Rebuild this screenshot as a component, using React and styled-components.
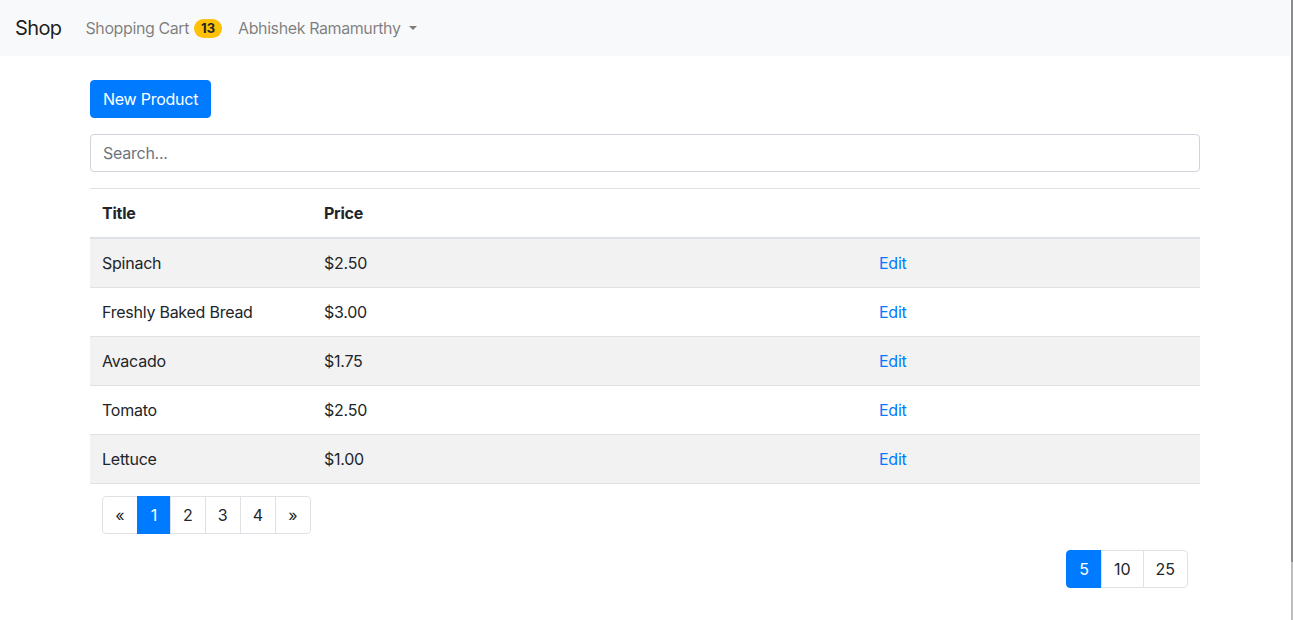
import { useState } from 'react'
import styled, { createGlobalStyle } from 'styled-components'

const GlobalStyle = createGlobalStyle`
    * { box-sizing: border-box; }
    body {
        margin: 0;
        font-family: Inter, "Noto Sans", sans-serif;
        font-size: 16px;
        line-height: 1.5;
        letter-spacing: -0.25px;
        color: #212529;
        background: #fff;
    }
`

const products = [
    { title: 'Spinach', price: 2.5 },
    { title: 'Freshly Baked Bread', price: 3 },
    { title: 'Avacado', price: 1.75 },
    { title: 'Tomato', price: 2.5 },
    { title: 'Lettuce', price: 1 },
]

const Page = styled.div`
    width: 1290px;
    min-height: 620px;
`

const Navbar = styled.nav`
    height: 56px;
    display: flex;
    align-items: center;
    padding: 8px 15px;
    background: #f8f9fa;
`

const Brand = styled.a`
    font-size: 20px;
    letter-spacing: -0.6px;
    color: rgba(0,0,0,.9);
    margin-right: 16px;
    text-decoration: none;
`

const NavLink = styled.a`
    display: flex;
    align-items: center;
    padding: 8px;
    letter-spacing: -0.4px;
    color: rgba(0,0,0,.5);
    text-decoration: none;
`

const Badge = styled.span`
    display: inline-block;
    margin-left: 5px;
    padding: 3px 7px;
    font-size: 13px;
    font-weight: 700;
    line-height: 13px;
    letter-spacing: 0;
    color: #212529;
    background: #ffc107;
    border-radius: 10px;
`

const Caret = styled.span`
    display: inline-block;
    margin-left: 8px;
    border-top: 4px solid;
    border-left: 4px solid transparent;
    border-right: 4px solid transparent;
`

const Container = styled.main`
    width: 1140px;
    margin: 0 auto;
    padding: 24px 15px 0;
`

const Button = styled.button`
    font: inherit;
    letter-spacing: inherit;
    color: #fff;
    background: #007bff;
    border: 1px solid #007bff;
    border-radius: 4px;
    padding: 6px 12px;
    line-height: 24px;
    cursor: pointer;
`

const Search = styled.input`
    display: block;
    width: 100%;
    height: 38px;
    margin: 16px 0;
    padding: 6px 12px;
    font: inherit;
    letter-spacing: inherit;
    color: #495057;
    border: 1px solid #ced4da;
    border-radius: 4px;
    &::placeholder { color: #6c757d; }
`

const Table = styled.table`
    width: 100%;
    border-collapse: collapse;
    table-layout: fixed;
`

const Th = styled.th`
    text-align: left;
    padding: 12px;
    border-top: 1px solid #dee2e6;
    border-bottom: 2px solid #dee2e6;
    font-weight: 700;
`

const Row = styled.tr`
    background: ${p => p.$striped ? 'rgba(0,0,0,.05)' : 'transparent'};
`

const Td = styled.td`
    padding: 12px;
    border-top: 1px solid #dee2e6;
    border-bottom: ${p => p.$last ? '1px solid #dee2e6' : '0'};
`

const EditLink = styled.a`
    color: #007bff;
    text-decoration: none;
`

const Footer = styled.div`
    padding: 12px 12px 0;
`

const Pagination = styled.ul`
    display: flex;
    list-style: none;
    margin: 0 0 16px;
    padding: 0;
    justify-content: ${p => p.$end ? 'flex-end' : 'flex-start'};
`

const PageLink = styled.li`
    min-width: ${p => p.$wide ? 36 : 34}px;
    text-align: center;
    padding: 8px 12px;
    line-height: 20px;
    margin-left: -1px;
    letter-spacing: 0;
    border: 1px solid ${p => p.$active ? '#007bff' : '#dee2e6'};
    background: ${p => p.$active ? '#007bff' : '#fff'};
    color: ${p => p.$active ? '#fff' : '#212529'};
    cursor: pointer;
    &:first-child { margin-left: 0; border-radius: 4px 0 0 4px; }
    &:last-child { border-radius: 0 4px 4px 0; }
`

const ScrollEdge = styled.div`
    position: fixed;
    top: 0;
    right: 0;
    width: 2px;
    height: 100%;
    background: linear-gradient(#8c8c8c 0 562px, #bdbdbd 562px);
`

export default function App() {
    const [page, setPage] = useState(1)
        , [size, setSize] = useState(5)

    return <>
        <GlobalStyle />
        <Page>
            <Navbar>
                <Brand href="#">Shop</Brand>
                <NavLink href="#">Shopping Cart <Badge>13</Badge></NavLink>
                <NavLink href="#">Abhishek Ramamurthy <Caret /></NavLink>
            </Navbar>
            <Container>
                <Button>New Product</Button>
                <Search placeholder="Search..." />
                <Table>
                    <colgroup>
                        <col style={{ width: 222 }} />
                        <col style={{ width: 555 }} />
                        <col />
                    </colgroup>
                    <thead>
                        <tr><Th>Title</Th><Th>Price</Th><Th></Th></tr>
                    </thead>
                    <tbody>
                        {products.map((p, i) => (
                            <Row key={p.title} $striped={i % 2 == 0}>
                                <Td $last={i == products.length - 1}>{p.title}</Td>
                                <Td $last={i == products.length - 1}>${p.price.toFixed(2)}</Td>
                                <Td $last={i == products.length - 1}><EditLink href="#">Edit</EditLink></Td>
                            </Row>
                        ))}
                    </tbody>
                </Table>
                <Footer>
                    <Pagination>
                        <PageLink $wide>«</PageLink>
                        {[1, 2, 3, 4].map(n => (
                            <PageLink key={n} $active={n == page} onClick={() => setPage(n)}>{n}</PageLink>
                        ))}
                        <PageLink $wide>»</PageLink>
                    </Pagination>
                    <Pagination $end>
                        {[5, 10, 25].map(n => (
                            <PageLink key={n} $active={n == size} onClick={() => setSize(n)}>{n}</PageLink>
                        ))}
                    </Pagination>
                </Footer>
            </Container>
        </Page>
        <ScrollEdge />
    </>
}
